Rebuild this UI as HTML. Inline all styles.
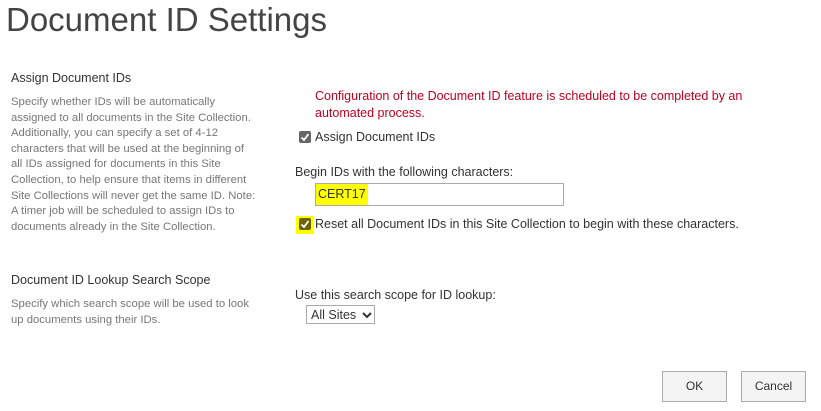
<!DOCTYPE html>
<html><head><style>
body{margin:0;width:821px;height:411px;background:#fff;font-family:"Liberation Sans",sans-serif;position:relative;overflow:hidden;color:#333}
.a{position:absolute;white-space:nowrap}
h1{position:absolute;left:6px;top:1px;margin:0;font-weight:normal;font-size:33px;color:#444;letter-spacing:0px}
.hd{font-size:12.5px;color:#333}
.ds{font-size:11.3px;color:#777;line-height:15.6px}
.t{font-size:12.5px;color:#333}
.cb{position:absolute;width:12px;height:12px;background:#666;border-radius:2px}
.cb svg{position:absolute;left:1px;top:1px}
.btn{position:absolute;width:63px;height:29px;border:1px solid #aaa;background:#f4f4f4;font-size:12px;text-align:center;line-height:29px;color:#333}
</style></head><body>
<h1>Document ID Settings</h1>
<div class="a hd" style="left:11px;top:71px">Assign Document IDs</div>
<div class="a ds" style="left:11px;top:95px">Specify whether IDs will be automatically<br>assigned to all documents in the Site Collection.<br>Additionally, you can specify a set of 4-12<br>characters that will be used at the beginning of<br>all IDs assigned for documents in this Site<br>Collection, to help ensure that items in different<br>Site Collections will never get the same ID. Note:<br>A timer job will be scheduled to assign IDs to<br>documents already in the Site Collection.</div>
<div class="a hd" style="left:11px;top:273px">Document ID Lookup Search Scope</div>
<div class="a ds" style="left:11px;top:297px">Specify which search scope will be used to look<br>up documents using their IDs.</div>
<div class="a t" style="left:315px;top:88px;color:#c00020;line-height:17px">Configuration of the Document ID feature is scheduled to be completed by an<br>automated process.</div>
<div class="cb" style="left:299px;top:131px"><svg width="10" height="10"><path d="M1.5 5.5L4 8L8.5 2" stroke="#fff" stroke-width="1.8" fill="none"/></svg></div>
<div class="a t" style="left:315px;top:130px">Assign Document IDs</div>
<div class="a t" style="left:295px;top:165px">Begin IDs with the following characters:</div>
<div class="a" style="left:315px;top:183px;width:247px;height:21px;border:1px solid #aaa"></div>
<div class="a t" style="left:316px;top:184px;height:21px;line-height:21px;background:#ff0;padding:0 2px">CERT17</div>
<div class="a" style="left:296px;top:216px;width:18px;height:18px;background:#ff0"></div>
<div class="cb" style="left:299px;top:218px;background:#6b6300"><svg width="10" height="10"><path d="M1.5 5.5L4 8L8.5 2" stroke="#fff" stroke-width="1.8" fill="none"/></svg></div>
<div class="a t" style="left:315px;top:217px">Reset all Document IDs in this Site Collection to begin with these characters.</div>
<div class="a t" style="left:295px;top:288px">Use this search scope for ID lookup:</div>
<div class="a t" style="left:306px;top:305px;height:19px;border:1px solid #aaa;line-height:19px;padding-left:4px;box-sizing:border-box;width:69px">All Sites <svg width="10" height="8" style="margin-left:2px"><path d="M1 2L5 6L9 2" stroke="#333" stroke-width="2" fill="none"/></svg></div>
<div class="btn" style="left:662px;top:371px">OK</div>
<div class="btn" style="left:741px;top:371px">Cancel</div>
</body></html>
